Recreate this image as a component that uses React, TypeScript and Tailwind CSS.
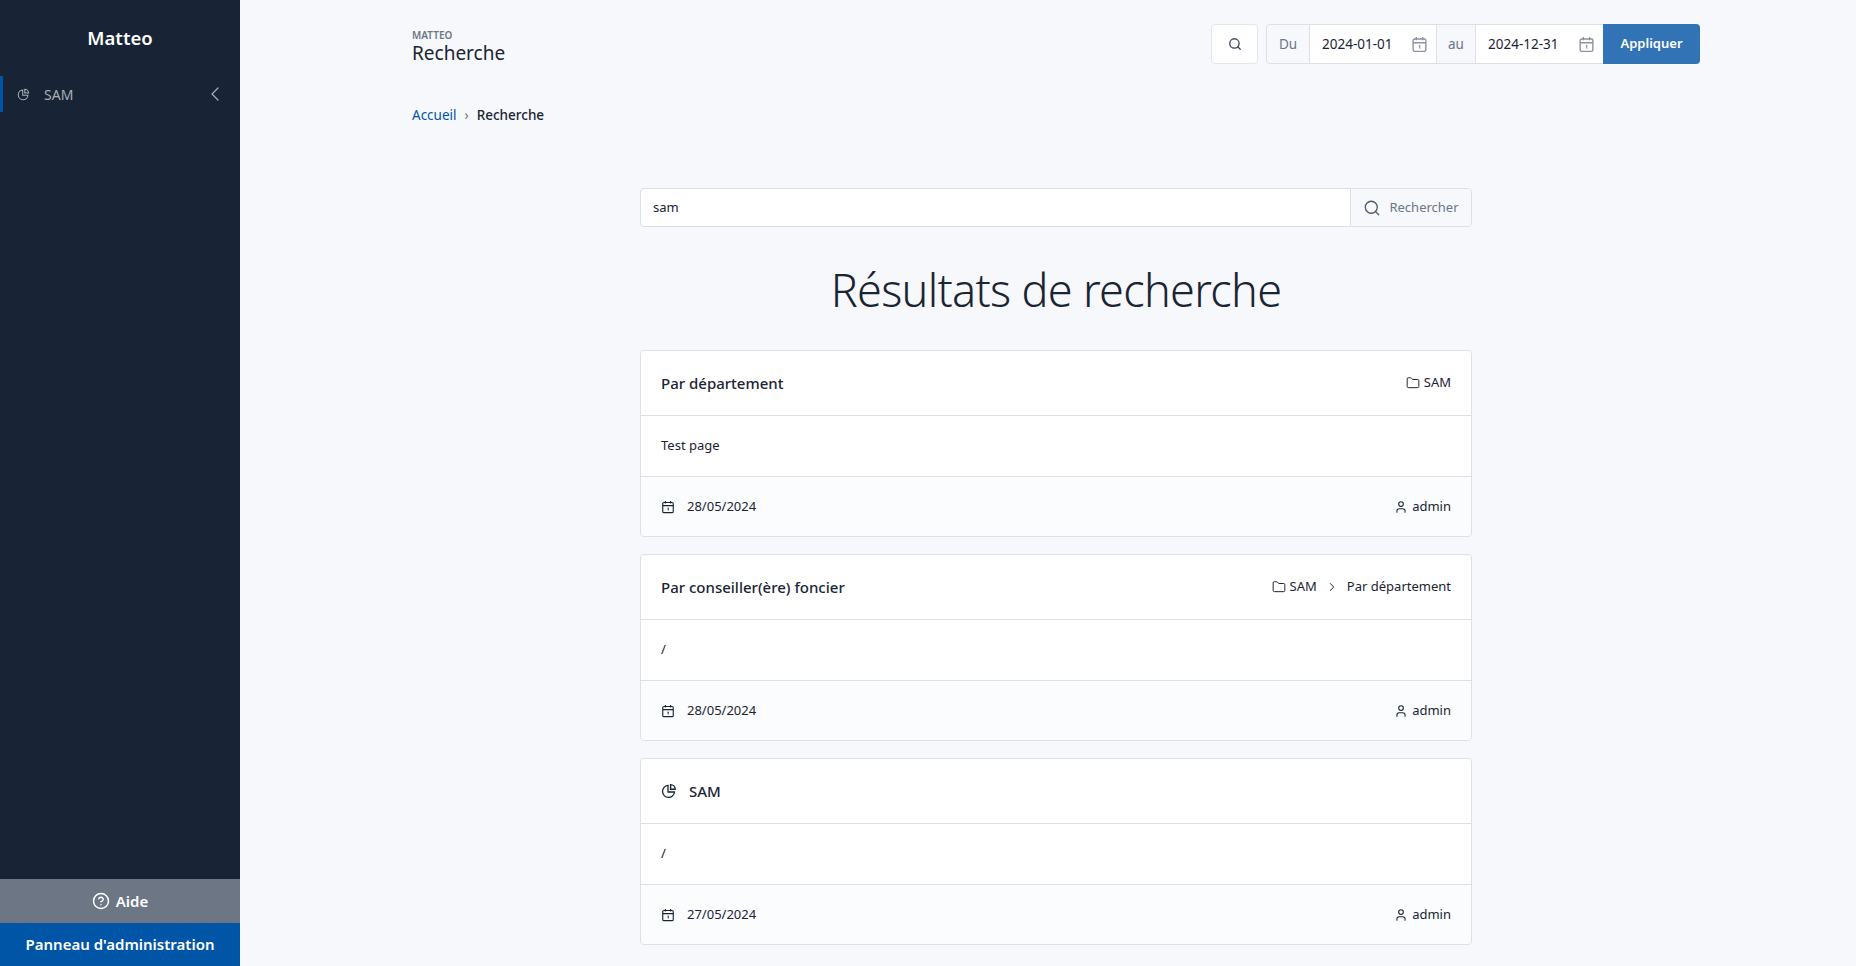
import { ChevronLeft, ChevronRight, CircleHelp, Folder, Search, User } from "lucide-react";

const results = [
  { title: "Par département", path: ["SAM"], body: "Test page", date: "28/05/2024" },
  { title: "Par conseiller(ère) foncier", path: ["SAM", "Par département"], body: "/", date: "28/05/2024" },
  { title: "SAM", pie: true, body: "/", date: "27/05/2024" },
];

function PieIcon({ className = "" }: { className?: string }) {
  return (
    <svg viewBox="0 0 16 16" fill="none" stroke="currentColor" strokeWidth="1.3" className={className}>
      <path d="M7 2.4a6 6 0 1 0 6.5 6.6H7z" />
      <path d="M9.6 1.6v4.6h4.6a4.6 4.6 0 0 0-4.6-4.6z" strokeWidth="1.4" />
    </svg>
  );
}

function CalendarIcon({ className = "" }: { className?: string }) {
  return (
    <svg viewBox="0 0 16 16" fill="none" stroke="currentColor" strokeWidth="1.3" className={className}>
      <rect x="2" y="2.8" width="12" height="11.7" rx="1.5" />
      <path d="M2 6.4h12M5 1v3M11 1v3" />
      <path d="M7.4 9.4 8.3 9v3" strokeWidth="1" />
    </svg>
  );
}

function ResultCard({ r }: { r: (typeof results)[number] }) {
  return (
    <div className="rounded border border-[#dde0e6] bg-white text-[13px] text-[#1a2433]">
      <div className="flex h-[65px] items-center justify-between border-b border-[#dde0e6] px-5">
        <div className="flex items-center text-[15px] font-medium">
          {r.pie && <PieIcon className="mr-3 h-4 w-4" />}
          {r.title}
        </div>
        {r.path && (
          <div className="flex items-center">
            <Folder className="mr-1 h-3.5 w-3.5" strokeWidth={1.7} />
            {r.path.map((p, i) => (
              <span key={p} className="flex items-center">
                {i > 0 && <ChevronRight className="mx-2 h-3.5 w-3.5" strokeWidth={1.7} />}
                {p}
              </span>
            ))}
          </div>
        )}
      </div>
      <div className="flex h-[61px] items-center border-b border-[#dde0e6] px-5">{r.body}</div>
      <div className="flex h-[59px] items-center justify-between rounded-b bg-[#fbfcfe] px-5">
        <div className="flex items-center">
          <CalendarIcon className="mr-3 h-3.5 w-3.5" />
          {r.date}
        </div>
        <div className="flex items-center">
          <User className="mr-1 h-3.5 w-3.5" strokeWidth={1.8} />
          admin
        </div>
      </div>
    </div>
  );
}

export default function App() {
  return (
    <div className="flex h-[966px] overflow-hidden bg-[#f6f8fc] font-['Noto_Sans',sans-serif]">
      <aside className="flex w-[240px] shrink-0 flex-col bg-[#182435] text-white">
        <div className="flex h-[76px] items-center justify-center text-[18.5px] font-semibold">Matteo</div>
        <div className="flex h-9 items-center border-l-[3px] border-[#0055a6] pl-[14px] pr-[13px] text-[14px] text-[#a9afb9]">
          <PieIcon className="mr-[14px] h-[13px] w-[13px]" />
          <span className="flex-1">SAM</span>
          <ChevronLeft className="h-6 w-6" strokeWidth={1.2} />
        </div>
        <div className="flex-1" />
        <div className="flex h-11 items-center justify-center gap-1.5 bg-[#6c7685] text-[15px] font-semibold">
          <CircleHelp className="h-[18px] w-[18px]" strokeWidth={2} />
          Aide
        </div>
        <div className="flex h-[43px] items-center justify-center bg-[#0055a6] text-[15px] font-semibold">
          Panneau d'administration
        </div>
      </aside>

      <main className="min-w-0 flex-1 pl-[172px] pr-[156px]">
        <div className="flex h-[105px] items-start justify-between pt-6">
          <div className="pt-1.5">
            <div className="text-[10px] font-semibold uppercase leading-[10px] text-[#6c7685]">Matteo</div>
            <div className="text-[19px] leading-[27px] text-[#1a2433]">Recherche</div>
          </div>
          <div className="flex items-center gap-2 text-[13.5px]">
            <div className="flex h-10 w-[47px] items-center justify-center rounded border border-[#e3e6ec] bg-white text-[#3a4659]">
              <Search className="h-3.5 w-3.5" strokeWidth={2.2} />
            </div>
            <div className="flex h-10 items-stretch rounded border border-[#dde0e6]">
              <div className="flex w-[43px] items-center justify-center rounded-l border-r border-[#dde0e6] bg-[#f6f8fc] text-[#6c7685]">Du</div>
              <div className="flex w-[126px] items-center justify-between bg-white pl-3 pr-2 text-[#1a2433]">
                2024-01-01
                <CalendarIcon className="h-[17px] w-[17px] text-[#8b93a0]" />
              </div>
              <div className="flex w-[40px] items-center justify-center border-x border-[#dde0e6] bg-[#f6f8fc] text-[#6c7685]">au</div>
              <div className="flex w-[127px] items-center justify-between bg-white pl-3 pr-2 text-[#1a2433]">
                2024-12-31
                <CalendarIcon className="h-[17px] w-[17px] text-[#8b93a0]" />
              </div>
              <div className="-my-px -mr-px flex w-[97px] items-center justify-center rounded-r bg-[#3173b5] text-[13px] font-semibold text-white">Appliquer</div>
            </div>
          </div>
        </div>

        <div className="flex items-center text-[13.5px] leading-5">
          <span className="text-[#0055a6]">Accueil</span>
          <span className="mx-2 text-[#6c7685]">›</span>
          <span className="font-medium text-[#1a2433]">Recherche</span>
        </div>

        <div className="ml-[228px] mt-[63px] w-[832px]">
          <div className="flex h-[39px] items-stretch rounded border border-[#dde0e6] bg-white text-[13px]">
            <div className="flex flex-1 items-center pl-3 text-[#1a2433]">sam</div>
            <div className="flex w-[121px] items-center justify-center gap-2 rounded-r border-l border-[#dde0e6] bg-[#f6f8fc] text-[#6c7685]">
              <Search className="h-[18px] w-[18px] text-[#4d596b]" strokeWidth={1.7} />
              Rechercher
            </div>
          </div>
          <h1 className="mt-[31px] h-[92px] text-center text-[45px] font-light leading-[64px] tracking-[-0.7px] text-[#1a2433]">
            Résultats de recherche
          </h1>
          <div className="flex flex-col gap-[17px]">
            {results.map((r) => (
              <ResultCard key={r.title} r={r} />
            ))}
          </div>
        </div>
      </main>
    </div>
  );
}
